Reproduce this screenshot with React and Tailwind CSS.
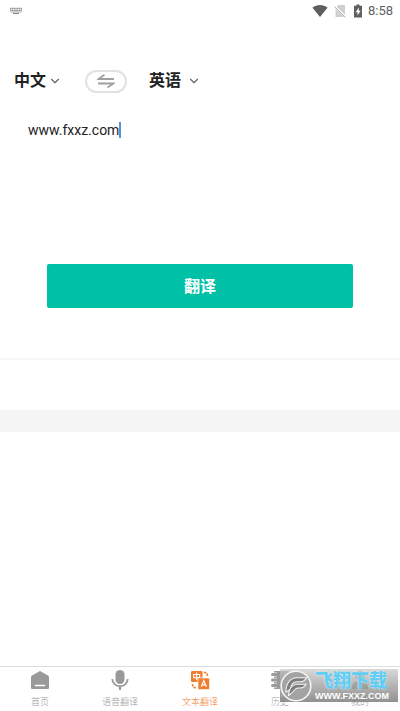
import React, { useState } from "react";
import { ChevronDown } from "lucide-react";

const LANGUAGES = ["中文", "英语"];

const StatusBar = () => (
  <div className="flex h-[22px] items-center justify-between pl-[10px] pr-[7px]">
    <svg className="h-2 w-3" viewBox="0 0 12 8" fill="none" aria-hidden="true">
      <path d="M0 1.5h12M0 3.5h12" stroke="#8a8a8a" strokeWidth="1.6" strokeDasharray="1.5 0.6" />
      <path d="M0.5 5h11" stroke="#b5b5b5" strokeWidth="1" />
      <path d="M3 6.5h6" stroke="#8a8a8a" strokeWidth="1.2" />
    </svg>
    <div className="flex items-center text-[#5f5f5f]">
      <svg className="mr-1.5 h-3 w-4" viewBox="0 0 16 12" fill="currentColor" aria-hidden="true">
        <path d="M8 12L0.5 2.8C2.6 1 5.2 0 8 0s5.4 1 7.5 2.8z" />
      </svg>
      <svg className="mr-2 h-3.5 w-3" viewBox="0 0 12 14" aria-hidden="true">
        <path d="M4.5 1H11v12H1.5V4z" fill="#cfcfcf" />
        <path d="M0 1.5L12 13.5" stroke="#fff" strokeWidth="2" />
        <path d="M0.5 2.5L11.5 13.5" stroke="#b0b0b0" strokeWidth="1" />
      </svg>
      <svg className="mr-1.5 h-3.5 w-2" viewBox="0 0 8 14" aria-hidden="true">
        <path d="M2.5 0.5h3v1.2H8V13.5H0V1.7h2.5z" fill="currentColor" />
        <path d="M4.8 3.5L1.6 8.2h2v3.3l3-4.7H4.8z" fill="#fff" />
      </svg>
      <span className="text-[13px] leading-4">8:58</span>
    </div>
  </div>
);

const LanguageSelect = ({ label, value, onChange, className }) => (
  <label className={`flex items-center ${className}`}>
    <select
      aria-label={label}
      value={value}
      onChange={(e) => onChange(e.target.value)}
      className="w-8 appearance-none bg-transparent text-base font-bold leading-6 outline-none"
    >
      {LANGUAGES.map((lang) => (
        <option key={lang} value={lang}>
          {lang}
        </option>
      ))}
    </select>
    <ChevronDown className="pointer-events-none h-3.5 w-3.5 text-[#666]" strokeWidth={2} />
  </label>
);

const HomeIcon = () => (
  <svg className="h-5 w-5" viewBox="0 0 20 20" aria-hidden="true">
    <path
      d="M10 1L18 5.5Q19 6.200 19 7.200V18Q19 19 18 19H2Q1 19 1 18V7.200Q1 6.200 2 5.500z"
      fill="currentColor"
    />
    <path d="M5.500 15.500h9" stroke="#fff" strokeWidth="1.500" strokeLinecap="round" />
  </svg>
);

const MicIcon = () => (
  <svg className="h-5 w-5" viewBox="0 0 20 20" fill="none" aria-hidden="true">
    <rect x="5.500" y="0" width="9" height="14" rx="4.500" fill="currentColor" />
    <path d="M2.300 9a7.700 7.200 0 0 0 15.400 0" stroke="currentColor" strokeWidth="1.800" />
    <path d="M10 16v4" stroke="currentColor" strokeWidth="2.200" />
  </svg>
);

const TranslateIcon = () => (
  <svg className="h-5 w-5" viewBox="0 0 20 20" fill="none" aria-hidden="true">
    <rect x="1" y="1" width="11.500" height="11" rx="1.200" fill="currentColor" />
    <path d="M3.700 4.500h6v3.200h-6zM6.700 2.600v7.600" stroke="#fff" strokeWidth="1.100" />
    <rect x="8" y="8" width="11.500" height="11.500" rx="1.200" fill="currentColor" stroke="#fff" strokeWidth="0.600" />
    <path d="M11.200 16.800l2.600-6.200 2.600 6.200M12.200 14.800h3.200" stroke="#fff" strokeWidth="1.200" />
    <path
      d="M13.800 2.200q3.400 0.300 3.800 3.800M2.400 14q0.400 3.600 3.800 4"
      stroke="currentColor"
      strokeWidth="1.600"
      strokeDasharray="2.400 0.800"
    />
  </svg>
);

const HistoryIcon = () => (
  <svg className="h-5 w-5" viewBox="0 0 20 20" fill="none" aria-hidden="true">
    <rect x="4" y="1" width="15" height="18" rx="1" fill="currentColor" />
    <path d="M2 4.500h5M2 10h5M2 15.500h5" stroke="#fff" strokeWidth="4.200" />
    <path d="M2.500 4.500h4.500M2.500 10h4.500M2.500 15.500h4.500" stroke="currentColor" strokeWidth="3" strokeLinecap="round" />
  </svg>
);

const UserIcon = () => (
  <svg className="h-5 w-5" viewBox="0 0 20 20" fill="currentColor" aria-hidden="true">
    <circle cx="10" cy="5.500" r="4.800" />
    <path d="M2 19q0-8 8-8t8 8z" />
  </svg>
);

const TABS = [
  { label: "首页", icon: HomeIcon },
  { label: "语音翻译", icon: MicIcon },
  { label: "文本翻译", icon: TranslateIcon },
  { label: "历史", icon: HistoryIcon },
  { label: "我的", icon: UserIcon },
];

const SiteBadge = () => (
  <div className="pointer-events-none absolute right-0 top-0.5 flex h-[33px] w-[120px] items-center">
    <div className="absolute bottom-0 left-0 top-0 w-[118px] bg-linear-to-b from-[#c8c8c8]/70 to-[#858585]/90" />
    <svg className="relative h-8 w-8 shrink-0" viewBox="0 0 32 32" fill="none" aria-hidden="true">
      <circle cx="16" cy="16" r="14.800" fill="#a3a3a3" stroke="#f4f4f4" strokeWidth="1.600" />
      <path
        d="M6 22C5.500 14 10 8 17 7.800h9.500c-1.500 3.200-3.500 4-6.500 4h-3c-4 0-6 3.400-6.300 7.400z"
        fill="#7d7d7d"
        stroke="#f4f4f4"
        strokeWidth="1.100"
      />
      <path
        d="M8.500 25.500c0.500-6.500 3-11 8.500-11.300h9c-1.300 3-3 3.800-6 3.800h-2.500c-3.500 0.300-4 5.500-9 7.500z"
        fill="#7d7d7d"
        stroke="#f4f4f4"
        strokeWidth="1.100"
      />
    </svg>
    <div className="relative ml-[3px] flex flex-col">
      <span className="whitespace-nowrap text-[18px] font-black leading-5 text-[#62cdf3] [text-shadow:0_0_2px_#e8f8ff]">
        飞翔下载
      </span>
      <span className="font-['Liberation_Sans',sans-serif] text-[9px] font-bold leading-[10px] text-white">
        WWW.FXXZ.COM
      </span>
    </div>
  </div>
);

export default function App() {
  const [from, setFrom] = useState("中文");
  const [to, setTo] = useState("英语");
  const [text, setText] = useState("www.fxxz.com");
  const [active, setActive] = useState("文本翻译");

  const handleSwap = () => {
    setFrom(to);
    setTo(from);
  };

  return (
    <div className="flex min-h-screen flex-col bg-white font-[Roboto,'Noto_Sans_CJK_SC',sans-serif] text-[#222]">
      <StatusBar />

      <main className="flex-1">
        <div className="mt-[47px] flex h-6 items-center pl-3.5">
          <LanguageSelect label="源语言" value={from} onChange={setFrom} className="gap-0.5" />
          <button
            type="button"
            aria-label="交换语言"
            onClick={handleSwap}
            className="ml-[23px] flex h-[23px] w-[42px] items-center justify-center rounded-full border-2 border-[#e2e2e2]"
          >
            <svg className="h-3.5 w-[18px]" viewBox="0 0 18 14" fill="none" aria-hidden="true">
              <path d="M17 5H1.500L7.500 0.800M1 9.500h15.500L10.500 13.500" stroke="#a0a0a0" strokeWidth="1.800" />
            </svg>
          </button>
          <LanguageSelect label="目标语言" value={to} onChange={setTo} className="ml-[22px] gap-1.5" />
        </div>

        <div className="mt-7 flex h-[18px] items-center pl-7">
          <input
            type="text"
            aria-label="翻译内容"
            value={text}
            onChange={(e) => setText(e.target.value)}
            className="field-sizing-content max-w-full text-sm leading-[18px] outline-none"
          />
          <span className="h-4 w-0.5 bg-[#5b8fd6]" />
        </div>

        <div className="mt-[125px] px-[47px]">
          <button
            type="button"
            className="h-11 w-full rounded-xs bg-[#00c1a5] pt-0.5 text-base font-bold text-white"
          >
            翻译
          </button>
        </div>

        <div className="mt-[50px] h-[52px] border-t-2 border-[#f7f7f7]" />
        <div className="h-[22px] bg-[#f5f5f5]" />
      </main>

      <nav className="relative grid h-[45px] grid-cols-5 border-t border-[#dcdcdc]">
        {TABS.map(({ label, icon: Icon }) => (
          <button
            key={label}
            type="button"
            onClick={() => setActive(label)}
            className={`flex flex-col items-center gap-1.5 pt-[3px] text-[9px] font-light leading-3 ${
              active === label ? "text-[#ee7d30]" : "text-[#999]"
            }`}
          >
            <Icon />
            {label}
          </button>
        ))}
        <SiteBadge />
      </nav>
    </div>
  );
}
